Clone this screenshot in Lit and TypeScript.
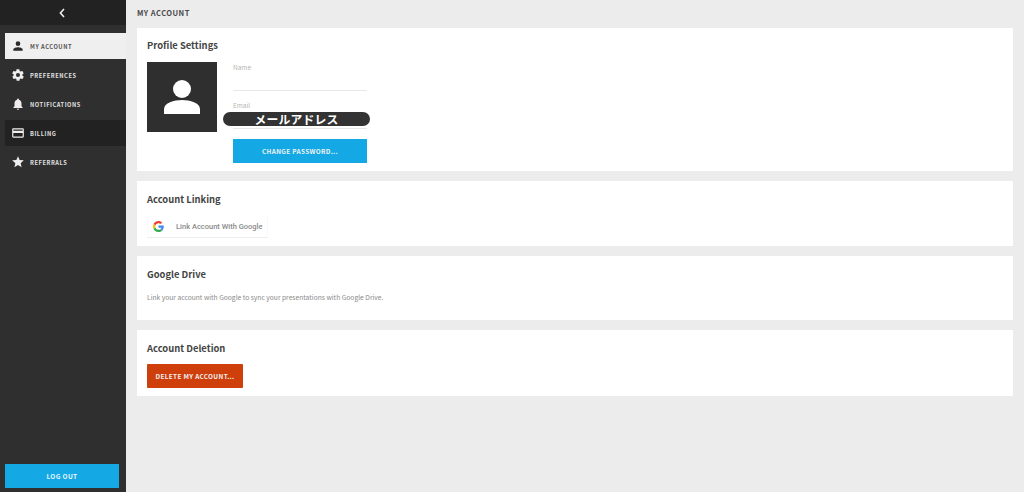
import { LitElement, html, css, svg } from "lit";
import { customElement } from "lit/decorators.js";

const icons: Record<string, unknown> = {
  user: svg`<path d="M12 12a4 4 0 1 0 0-8 4 4 0 0 0 0 8zm0 2c-2.700 0-8 1.300-8 4v2h16v-2c0-2.700-5.300-4-8-4z"/>`,
  gear: svg`<path d="M19.400 13c.1-.3.1-.6.1-1s0-.7-.1-1l2.100-1.600c.2-.2.2-.4.1-.6l-2-3.500c-.1-.2-.4-.3-.6-.2l-2.500 1c-.5-.4-1.100-.7-1.700-1l-.4-2.700c0-.2-.2-.4-.5-.4h-4c-.2 0-.5.2-.5.4l-.4 2.700c-.6.3-1.200.6-1.700 1l-2.500-1c-.2-.1-.5 0-.6.2l-2 3.500c-.1.2-.1.5.1.6L4.600 11c0 .3-.1.6-.1 1s0 .7.1 1l-2.100 1.600c-.2.2-.2.4-.1.6l2 3.500c.1.2.4.3.6.2l2.500-1c.5.4 1.100.7 1.700 1l.4 2.700c0 .2.3.4.5.4h4c.3 0 .5-.2.5-.4l.4-2.700c.6-.3 1.200-.6 1.700-1l2.500 1c.2.1.5 0 .6-.2l2-3.500c.1-.2.1-.5-.1-.6L19.400 13zM12 15.500a3.500 3.500 0 1 1 0-7 3.500 3.500 0 0 1 0 7z"/>`,
  bell: svg`<path d="M12 22c1.100 0 2-.9 2-2h-4c0 1.100.9 2 2 2zm6-6v-5c0-3.100-1.600-5.600-4.500-6.300V4c0-.8-.7-1.500-1.500-1.500s-1.500.7-1.500 1.500v.7C7.600 5.400 6 7.900 6 11v5l-2 2v1h16v-1l-2-2z"/>`,
  card: svg`<path d="M20 4H4c-1.100 0-2 .9-2 2v12c0 1.100.9 2 2 2h16c1.100 0 2-.9 2-2V6c0-1.100-.9-2-2-2zm0 14H4v-6h16v6zm0-10H4V6h16v2z"/>`,
  star: svg`<path d="M12 17.300l6.200 3.700-1.600-7L22 9.200l-7.200-.6L12 2 9.200 8.600 2 9.200 7.500 14l-1.700 7z"/>`,
};

const nav = [
  { icon: "user", label: "MY ACCOUNT", cls: "active" },
  { icon: "gear", label: "PREFERENCES", cls: "" },
  { icon: "bell", label: "NOTIFICATIONS", cls: "" },
  { icon: "card", label: "BILLING", cls: "dark" },
  { icon: "star", label: "REFERRALS", cls: "" },
];

@customElement("app-root")
export class AppRoot extends LitElement {
  static styles = css`
    :host {
      display: flex;
      width: 1024px;
      height: 492px;
      overflow: hidden;
      background: #ececec;
      font-family: "Noto Sans CJK JP", "Noto Sans", sans-serif;
      color: #333;
    }
    .side {
      width: 126px;
      flex: none;
      background: #2f2f2f;
      display: flex;
      flex-direction: column;
    }
    .back {
      height: 25px;
      background: #222;
      display: flex;
      align-items: center;
      justify-content: center;
      padding-right: 2px;
    }
    .back svg { width: 8px; height: 10px; display: block; }
    .nav {
      display: flex;
      flex-direction: column;
      gap: 3px;
      padding: 8px 0 0 5px;
      flex: 1;
    }
    .item {
      height: 26px;
      display: flex;
      align-items: center;
      padding-left: 6px;
      gap: 5px;
      color: #e0e0e0;
      font-size: 5.7px;
      font-weight: 700;
      letter-spacing: 0.56px;
    }
    .item svg { width: 14px; height: 14px; fill: #eee; flex: none; }
    .item.active { background: #efefef; color: #555; }
    .item.active svg { fill: #2b2b2b; }
    .item.dark { background: #222; }
    .logout {
      margin: 0 7px 4px 5px;
      height: 24px;
      background: #14a9e4;
      color: #e8f7fd;
      font-size: 6.5px;
      font-weight: 700;
      letter-spacing: 0.35px;
      display: flex;
      align-items: center;
      justify-content: center;
    }
    .main {
      flex: 1;
      padding: 0 11px;
      display: flex;
      flex-direction: column;
    }
    .title {
      height: 28px;
      display: flex;
      align-items: center;
      font-size: 7.5px;
      font-weight: 700;
      letter-spacing: 0.47px;
      color: #4a4a4a;
      padding-bottom: 3px;
      box-sizing: border-box;
    }
    .cards { display: flex; flex-direction: column; gap: 10px; }
    .card {
      background: #fff;
      padding: 0 10px;
      box-sizing: border-box;
    }
    h2 {
      margin: 0;
      font-size: 9.4px;
      font-weight: 700;
      line-height: 14px;
      color: #444;
    }
    .profile { height: 143px; padding-top: 10px; }
    .row { display: flex; margin-top: 10px; gap: 16px; }
    .avatar {
      width: 70px;
      height: 70px;
      background: #2f2f2f;
      display: flex;
      align-items: center;
      justify-content: center;
    }
    .avatar svg { width: 38px; height: 38px; fill: #fff; display: block; }
    .form { width: 134px; display: flex; flex-direction: column; }
    .label { font-size: 6.5px; line-height: 10px; color: #b4b4b4; }
    .line { height: 1px; background: #e8e8e8; }
    .name-line { margin-top: 18px; }
    .email-label { margin-top: 9px; }
    .mask-wrap { position: relative; height: 18px; }
    .mask {
      position: absolute;
      left: -10px;
      top: 2px;
      width: 147px;
      height: 14px;
      border-radius: 7px;
      background: #333;
      color: #fff;
      font-size: 11.8px;
      font-weight: 700;
      line-height: 14px;
      text-align: center;
      letter-spacing: 0.2px;
    }
    .btn {
      display: flex;
      align-items: center;
      justify-content: center;
      color: #f2f2f2;
      font-size: 6.4px;
      font-weight: 700;
      letter-spacing: 0.35px;
    }
    .pw { height: 24px; background: #14a9e4; margin-top: 10px; }
    .linking { height: 65px; padding-top: 11px; }
    .google {
      margin-top: 9px;
      width: 121px;
      height: 23px;
      display: flex;
      align-items: center;
      border-bottom: 1px solid #eee;
      border-left: 1px solid #fafafa;
      border-right: 1px solid #f8f8f8;
      box-sizing: border-box;
      font-family: Roboto, "Noto Sans", sans-serif;
      font-size: 7.5px;
      font-weight: 500;
      color: #8a8a8a;
      white-space: nowrap;
    }
    .google svg { width: 11px; height: 11px; margin: 0 12px 0 5px; flex: none; }
    .drive { height: 64px; padding-top: 11px; }
    .drive p {
      margin: 11px 0 0;
      font-size: 6.7px;
      line-height: 11px;
      color: #8a8a8a;
    }
    .deletion { height: 66px; padding-top: 11px; }
    .del {
      margin-top: 9px;
      width: 96px;
      height: 24px;
      background: #cf3f0b;
      border-radius: 1px;
    }
  `;

  render() {
    return html`
      <aside class="side">
        <div class="back">
          <svg viewBox="0 0 8 10"><path d="M6 1L2.400 5 6 9" fill="none" stroke="#eee" stroke-width="1.600"/></svg>
        </div>
        <nav class="nav">
          ${nav.map(
            (n) => html`<div class="item ${n.cls}">
              <svg viewBox="0 0 24 24">${icons[n.icon]}</svg><span>${n.label}</span>
            </div>`
          )}
        </nav>
        <div class="logout">LOG OUT</div>
      </aside>
      <main class="main">
        <div class="title">MY ACCOUNT</div>
        <div class="cards">
          <section class="card profile">
            <h2>Profile Settings</h2>
            <div class="row">
              <div class="avatar">
                <svg viewBox="0 0 38 38"><circle cx="19" cy="11" r="9"/><path d="M1 36v-5c0-6 10-9 18-9s18 3 18 9v5z"/></svg>
              </div>
              <div class="form">
                <div class="label">Name</div>
                <div class="line name-line"></div>
                <div class="label email-label">Email</div>
                <div class="mask-wrap"><div class="mask">メールアドレス</div></div>
                <div class="line"></div>
                <div class="btn pw">CHANGE PASSWORD...</div>
              </div>
            </div>
          </section>
          <section class="card linking">
            <h2>Account Linking</h2>
            <div class="google">
              <svg viewBox="0 0 48 48">
                <path fill="#EA4335" d="M24 9.500c3.500 0 6.700 1.200 9.200 3.600l6.900-6.900C35.900 2.400 30.500 0 24 0 14.600 0 6.500 5.400 2.600 13.200l8 6.200C12.500 13.700 17.800 9.500 24 9.500z"/>
                <path fill="#4285F4" d="M47 24.500c0-1.600-.1-3.100-.4-4.500H24v9h12.900c-.6 3-2.200 5.500-4.700 7.200l7.700 6c4.500-4.200 7.100-10.300 7.100-17.700z"/>
                <path fill="#FBBC05" d="M10.500 28.600c-.5-1.400-.8-3-.8-4.600s.3-3.200.8-4.600l-8-6.200C.9 16.500 0 20.100 0 24s.9 7.500 2.600 10.800l7.900-6.200z"/>
                <path fill="#34A853" d="M24 48c6.500 0 11.900-2.100 15.900-5.800l-7.700-6c-2.200 1.500-5 2.300-8.200 2.300-6.200 0-11.500-4.200-13.400-9.900l-8 6.200C6.500 42.600 14.600 48 24 48z"/>
              </svg>
              <span>Link Account With Google</span>
            </div>
          </section>
          <section class="card drive">
            <h2>Google Drive</h2>
            <p>Link your account with Google to sync your presentations with Google Drive.</p>
          </section>
          <section class="card deletion">
            <h2>Account Deletion</h2>
            <div class="btn del">DELETE MY ACCOUNT...</div>
          </section>
        </div>
      </main>
    `;
  }
}
